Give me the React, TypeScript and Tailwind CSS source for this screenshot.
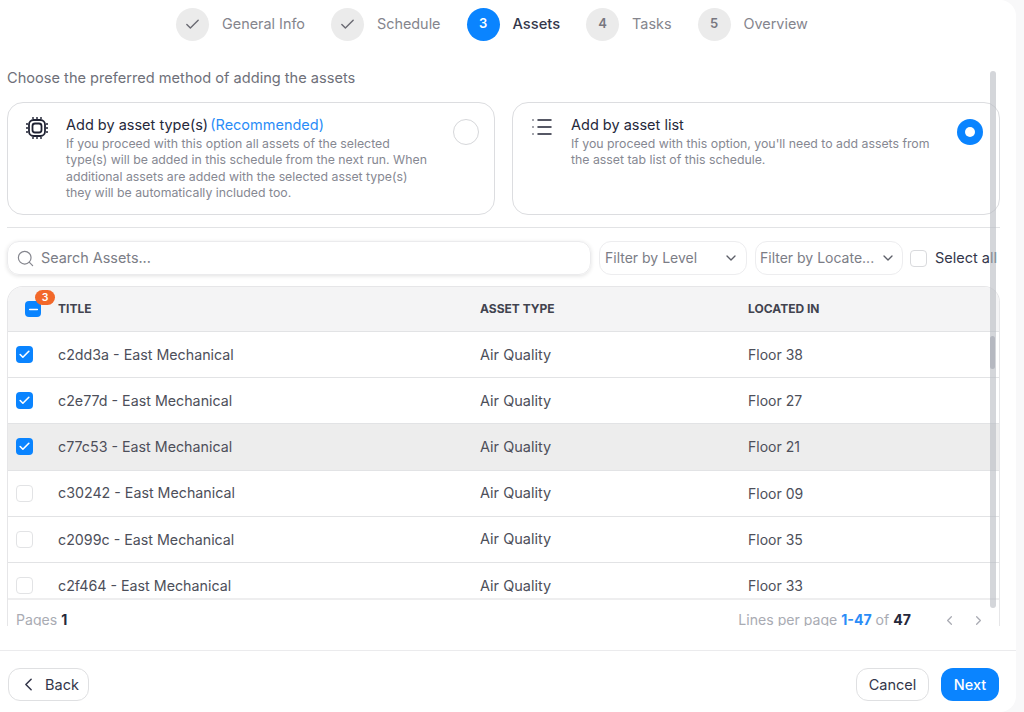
import { Check, ChevronDown, ChevronLeft, ChevronRight, List, Minus, Search } from 'lucide-react';

const steps = [
  { label: 'General Info', done: true },
  { label: 'Schedule', done: true },
  { label: 'Assets', num: 3, active: true },
  { label: 'Tasks', num: 4 },
  { label: 'Overview', num: 5 },
];

const rows = [
  { title: 'c2dd3a - East Mechanical', floor: 'Floor 38', checked: true },
  { title: 'c2e77d - East Mechanical', floor: 'Floor 27', checked: true },
  { title: 'c77c53 - East Mechanical', floor: 'Floor 21', checked: true, hover: true },
  { title: 'c30242 - East Mechanical', floor: 'Floor 09' },
  { title: 'c2099c - East Mechanical', floor: 'Floor 35' },
  { title: 'c2f464 - East Mechanical', floor: 'Floor 33' },
];

function ChipIcon() {
  return (
    <svg width="24" height="24" viewBox="0 0 24 24" fill="none" stroke="#1f2233" strokeWidth="1.8">
      <rect x="4" y="4" width="16" height="16" rx="4.5" />
      <rect x="7.5" y="7.5" width="9" height="9" rx="2.5" />
      <path d="M8 1v2M12 1v2M16 1v2M8 21v2M12 21v2M16 21v2M1 8h2M1 12h2M1 16h2M21 8h2M21 12h2M21 16h2" strokeWidth="1.4" />
    </svg>
  );
}

export default function App() {
  return (
    <div className="w-[1024px] h-[712px] overflow-hidden bg-[#f8f8f9] font-['Inter',sans-serif]">
      <div className="relative w-[1016px] h-[712px] flex flex-col bg-white rounded-r-[16px]">
        <div className="h-[47px] flex items-center gap-[26px] pl-[176px] pt-[1px]">
          {steps.map(step => (
            <div key={step.label} className="flex items-center gap-[13px]">
              <div
                className={`w-[33px] h-[33px] rounded-full flex items-center justify-center text-[13px] font-semibold ${
                  step.active ? 'bg-[#0a84ff] text-white' : 'bg-[#ebebeb] text-[#77777f]'
                }`}
              >
                {step.done ? <Check className="w-[17px] h-[17px] text-[#6b6b73]" strokeWidth={2} /> : step.num}
              </div>
              <span className={step.active ? 'text-[14.7px] text-[#33364a] font-medium' : 'text-[14.4px] text-[#85858d]'}>
                {step.label}
              </span>
            </div>
          ))}
        </div>

        <div className="h-[579px] overflow-hidden pl-[7px] pr-[16px]">
          <p className="mt-[21px] text-[14.6px] leading-[20px] text-[#6e7079]">Choose the preferred method of adding the assets</p>

          <div className="mt-[14px] flex gap-[17px]">
            <div className="w-[488px] h-[113px] rounded-[16px] border border-[#dcdde0] flex pl-[17px] pr-[15px] pt-[12px]">
              <div className="w-[24px] shrink-0 pt-[1px]">
                <ChipIcon />
              </div>
              <div className="ml-[17px] w-[366px]">
                <div className="text-[14.5px] leading-[20px] text-[#25283a]">
                  Add by asset type(s) <span className="-ml-[2px] text-[#2a8cf7]">(Recommended)</span>
                </div>
                <p className="text-[12.3px] leading-[16.4px] text-[#868892] mt-[1px]">
                  If you proceed with this option all assets of the selected type(s) will be added in this schedule from the next run. When additional assets are added with the selected asset type(s) they will be automatically included too.
                </p>
              </div>
              <div className="ml-auto mt-[4px] w-[26px] h-[26px] rounded-full border border-[#d6d7da] shrink-0" />
            </div>

            <div className="w-[488px] h-[113px] rounded-[16px] border border-[#dcdde0] flex pl-[17px] pr-[16px] pt-[12px]">
              <List className="w-[24px] h-[24px] text-[#1f2233] shrink-0" strokeWidth={1.5} />
              <div className="ml-[17px] w-[372px]">
                <div className="text-[14.5px] leading-[20px] text-[#25283a]">Add by asset list</div>
                <p className="text-[12.3px] leading-[16.4px] text-[#868892] mt-[1px]">
                  If you proceed with this option, you'll need to add assets from the asset tab list of this schedule.
                </p>
              </div>
              <div className="ml-auto mt-[4px] w-[26px] h-[26px] rounded-full bg-[#0a84ff] flex items-center justify-center shrink-0">
                <div className="w-[10px] h-[10px] rounded-full bg-white" />
              </div>
            </div>
          </div>

          <div className="mt-[12px] h-px w-[993px] bg-[#e2e3e5]" />

          <div className="mt-[13px] flex items-center h-[34px] w-[1000px]">
            <div className="w-[584px] h-[34px] rounded-[12px] border border-[#ebebed] shadow-[0_1px_4px_rgba(0,0,0,0.12)] flex items-center pl-[8px] gap-[6px]">
              <Search className="w-[19px] h-[19px] text-[#85868e]" strokeWidth={1.5} />
              <span className="text-[14.4px] text-[#7b7d86]">Search Assets...</span>
            </div>
            <div className="ml-[8px] w-[148px] h-[34px] rounded-[12px] border border-[#ededef] flex items-center justify-between pl-[5px] pr-[7px]">
              <span className="text-[14px] leading-[20px] whitespace-nowrap text-[#7b7d86]">Filter by Level</span>
              <ChevronDown className="w-[16px] h-[16px] text-[#5d5f68]" strokeWidth={2} />
            </div>
            <div className="ml-[8px] w-[148px] h-[34px] rounded-[12px] border border-[#ededef] flex items-center justify-between pl-[4px] pr-[6px]">
              <span className="text-[14px] leading-[20px] whitespace-nowrap text-[#7b7d86]">Filter by Locate...</span>
              <ChevronDown className="w-[16px] h-[16px] text-[#5d5f68] shrink-0" strokeWidth={2} />
            </div>
            <div className="ml-[7px] w-[17px] h-[17px] rounded-[4px] border border-[#d9dadd]" />
            <span className="ml-[8px] text-[14.5px] whitespace-nowrap text-[#33364a]">Select all</span>
          </div>

          <div className="mt-[11px] w-[993px] rounded-t-[16px] border-x border-t border-[#e6e6e8] overflow-hidden">
            <div className="h-[45px] bg-[#f4f4f5] grid grid-cols-[50px_422px_268px_1fr] items-center text-[12px] font-bold text-[#41434f] border-b border-[#e2e3e5]">
              <div className="relative h-full flex items-center">
                <div className="ml-[17px] w-[16px] h-[16px] rounded-[4px] bg-[#0a84ff] flex items-center justify-center">
                  <Minus className="w-[13px] h-[13px] text-white" strokeWidth={3} />
                </div>
                <div className="absolute left-[27px] top-[3px] w-[20px] h-[15px] rounded-full bg-[#f2682a] text-white text-[10.5px] leading-[15px] text-center font-semibold">
                  3
                </div>
              </div>
              <span>TITLE</span>
              <span>ASSET TYPE</span>
              <span>LOCATED IN</span>
            </div>

            <div className="h-[266px] overflow-hidden">
              {rows.map(row => (
                <div
                  key={row.title}
                  className={`h-[46.2px] grid grid-cols-[50px_422px_268px_1fr] items-center text-[#4d4f5a] border-b border-[#e2e3e5] ${
                    row.hover ? 'bg-[#ededed]' : 'bg-white'
                  }`}
                >
                  {row.checked ? (
                    <div className="ml-[8px] w-[17px] h-[17px] rounded-[4px] bg-[#0a84ff] flex items-center justify-center">
                      <Check className="w-[13px] h-[13px] text-white" strokeWidth={3} />
                    </div>
                  ) : (
                    <div className="ml-[8px] w-[17px] h-[17px] rounded-[4px] border border-[#e2e3e5] bg-white" />
                  )}
                  <span className="text-[14.25px]">{row.title}</span>
                  <span className="text-[14.5px]">Air Quality</span>
                  <span className="text-[14px]">{row.floor}</span>
                </div>
              ))}
            </div>

            <div className="h-[42px] border-t-2 border-[#eeeeef] flex items-start pt-[10px] pl-[8px] pr-[13px] text-[14.1px] leading-[20px] text-[#a9abb3]">
              <span>
                Pages <b className="font-bold text-[#25283a]">1</b>
              </span>
              <span className="ml-auto">
                Lines per page <b className="font-bold text-[#2a8cf7]">1-47</b> of <b className="font-bold text-[#25283a]">47</b>
              </span>
              <ChevronLeft className="ml-[31px] mt-[3px] w-[15px] h-[15px] text-[#a9abb3]" />
              <ChevronRight className="ml-[14px] mt-[3px] w-[15px] h-[15px] text-[#a9abb3]" />
            </div>
          </div>
        </div>

        <div className="mt-[24px] border-t border-[#ebebed] flex-1 flex items-start pt-[17px] pl-[8px] pr-[17px]">
          <button className="w-[81px] h-[33px] rounded-[12px] border border-[#dfe0e2] flex items-center justify-center gap-[6px] text-[14.5px] text-[#33364a]">
            <ChevronLeft className="w-[21px] h-[21px] text-[#33364a]" strokeWidth={1.75} />
            Back
          </button>
          <button className="ml-auto w-[73px] h-[33px] rounded-[12px] border border-[#dfe0e2] text-[14.5px] text-[#33364a]">Cancel</button>
          <button className="ml-[12px] w-[58px] h-[33px] rounded-[12px] bg-[#0a84ff] text-[14.5px] font-medium text-white">Next</button>
        </div>

        <div className="absolute left-[990px] top-[71px] w-[6px] h-[537px] rounded-full bg-[#b8bac2]/60" />
        <div className="absolute left-[990px] top-[336px] w-[5px] h-[33px] rounded-full bg-[#b5b8c0]" />
      </div>
    </div>
  );
}
